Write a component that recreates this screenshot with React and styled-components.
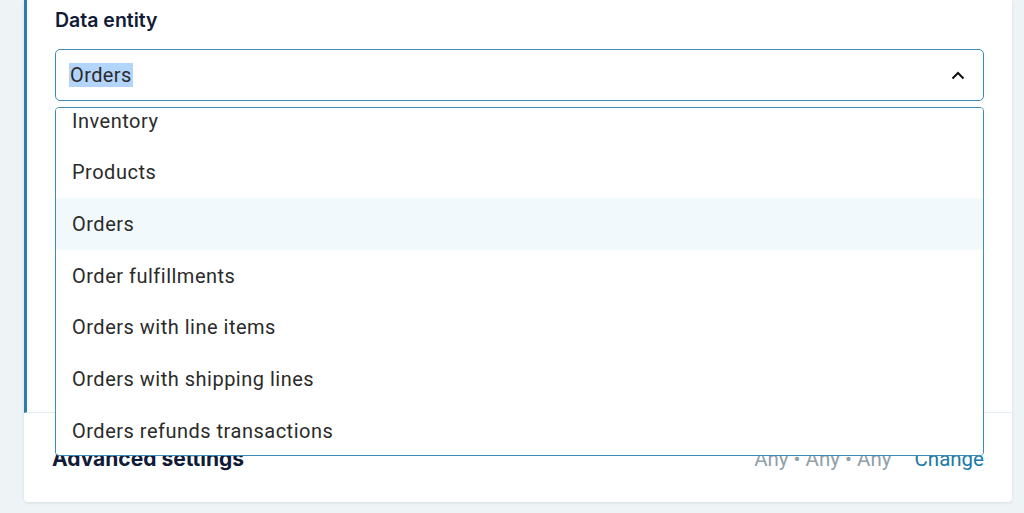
import { useEffect, useRef } from "react";
import styled, { createGlobalStyle } from "styled-components";

const GlobalStyle = createGlobalStyle`
  html, body {
    margin: 0;
    padding: 0;
    background: #eef3f6;
    overflow: hidden;
  }
  * { box-sizing: border-box; }
`;

const Page = styled.div`
  width: 1024px;
  height: 513px;
  padding: 0 12px 0 24px;
  background: #eef3f6;
`;

const Card = styled.div`
  background: #fff;
  border-radius: 0 0 4px 4px;
  box-shadow: 0 1px 3px rgba(40, 70, 90, 0.12);
  height: 502px;
  display: flex;
  flex-direction: column;
`;

const TopSection = styled.div`
  position: relative;
  height: 413px;
  border-left: 3px solid #2a7fa8;
  border-bottom: 1px solid #e4ebf0;
  padding: 8px 28px 0 28px;
`;

const Label = styled.div`
  font-family: Inter, "Noto Sans", sans-serif;
  font-weight: 600;
  font-size: 19.5px;
  color: #111a36;
  line-height: 24px;
  margin-bottom: 17px;
`;

const SelectBox = styled.div`
  height: 52px;
  border: 1.5px solid #3d8db3;
  border-radius: 5px;
  display: flex;
  align-items: center;
  justify-content: space-between;
  padding: 0 18px 0 13px;
  font-family: Roboto, "Noto Sans", sans-serif;
  font-size: 20px;
  letter-spacing: 0.4px;
  color: #2b2b2b;
`;

const Selected = styled.span`
  background: #b4d5fb;
  padding: 0 1px;
  line-height: 24px;
`;

const Menu = styled.div`
  position: absolute;
  top: 107px;
  left: 28px;
  right: 28px;
  height: 349px;
  border: 1.5px solid #3d8db3;
  border-radius: 4px;
  background: #fff;
  overflow-y: auto;
  scrollbar-width: none;
  z-index: 2;
  &::-webkit-scrollbar { display: none; }
`;

const Option = styled.div`
  height: 51.67px;
  display: flex;
  align-items: center;
  padding-left: 16px;
  font-family: Roboto, "Noto Sans", sans-serif;
  font-size: 20px;
  letter-spacing: 0.5px;
  color: #2b2b2b;
  background: ${(p) => (p.$active ? "#f2f9fc" : "#fff")};
`;

const BottomSection = styled.div`
  flex: 1;
  display: flex;
  align-items: center;
  justify-content: space-between;
  padding: 2px 28px 0 28px;
`;

const Title = styled.div`
  font-family: Inter, "Noto Sans", sans-serif;
  font-weight: 700;
  font-size: 21px;
  color: #111a36;
`;

const Summary = styled.div`
  display: flex;
  align-items: center;
  gap: 23px;
  font-family: Roboto, "Noto Sans", sans-serif;
  font-size: 20.5px;
`;

const Muted = styled.span`
  color: #909fa9;
`;

const Link = styled.a`
  color: #1c7aa6;
  text-decoration: none;
  cursor: pointer;
`;

const options = [
  "Inventory",
  "Products",
  "Orders",
  "Order fulfillments",
  "Orders with line items",
  "Orders with shipping lines",
  "Orders refunds transactions",
];

export default function App() {
  const menuRef = useRef(null);

  useEffect(() => {
    // list is scrolled a little, first option is cut at the top
    if (menuRef.current) menuRef.current.scrollTop = 13;
  }, []);

  return (
    <>
      <GlobalStyle />
      <Page>
        <Card>
          <TopSection>
            <Label>Data entity</Label>
            <SelectBox>
              <Selected>Orders</Selected>
              <svg width="14" height="9" viewBox="0 0 14 9" fill="none">
                <path d="M1.5 7.5L7 2l5.5 5.5" stroke="#111" strokeWidth="2" />
              </svg>
            </SelectBox>
            <Menu ref={menuRef}>
              {options.map((o) => (
                <Option key={o} $active={o === "Orders"}>
                  {o}
                </Option>
              ))}
              <div style={{ height: 20 }} />
            </Menu>
          </TopSection>
          <BottomSection>
            <Title>Advanced settings</Title>
            <Summary>
              <Muted>Any • Any • Any</Muted>
              <Link>Change</Link>
            </Summary>
          </BottomSection>
        </Card>
      </Page>
    </>
  );
}
